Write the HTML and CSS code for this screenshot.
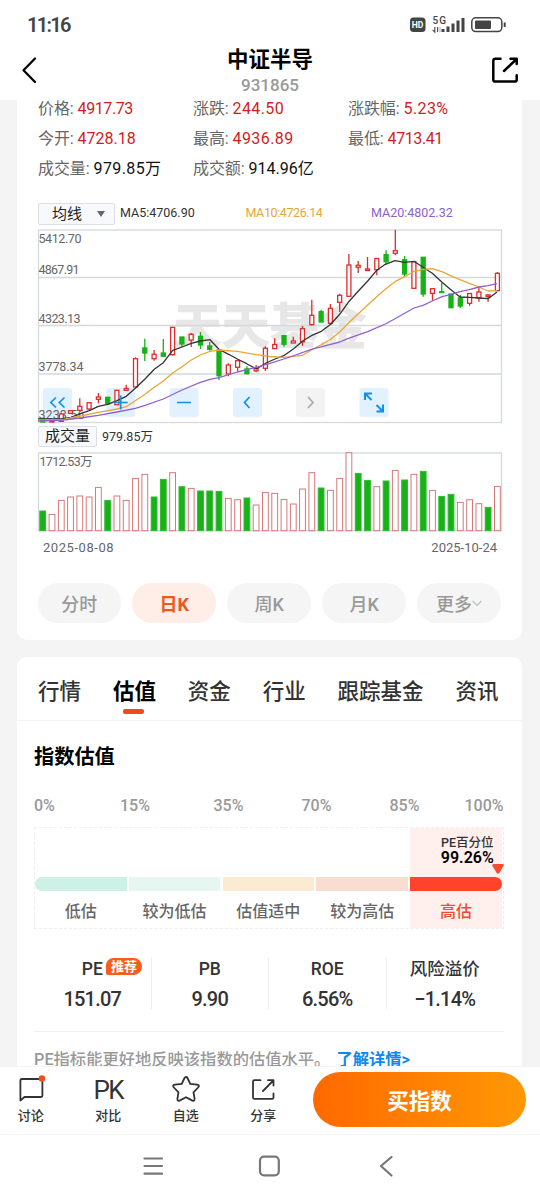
FILE: index.html
```html
<!DOCTYPE html>
<html lang="zh-CN">
<head>
<meta charset="utf-8">
<meta name="viewport" content="width=device-width">
<title>中证半导</title>
<link rel="stylesheet" href="styles.css">
</head>
<body>
<div class="phone">
  <header class="top">
    <div class="status">
      <span class="clock">11:16</span>
      <svg class="status-icons" width="98" height="20" viewBox="409 15 98 20">
        <rect x="410" y="17.5" width="15.5" height="14.5" rx="3.5" fill="#444"/>
        <text x="411.8" y="28.2" font-size="8.5" font-weight="700" fill="#fff" textLength="11.6" lengthAdjust="spacingAndGlyphs">HD</text>
        <text x="432.5" y="24" font-size="10" font-weight="500" fill="#444" textLength="13.5">5G</text>
        <path d="M434.8 27v5l-2.2-2.2M437.6 32v-5" stroke="#555" fill="none" stroke-width="1.2"/><path d="M440 27v5" stroke="#aaa"/>
        <path d="M443 29v3M448 26.5V32M453 23.500V32M458 20.500V32M463 18V32" stroke="#444" stroke-width="3"/>
        <rect x="471.800" y="17.800" width="30" height="13.800" rx="4" fill="none" stroke="#444" stroke-width="1.500"/>
        <rect x="475" y="20.500" width="16" height="8.500" rx="1" fill="#444"/>
        <path d="M504.700 22.500v4.500" stroke="#444" stroke-width="2"/>
      </svg>
    </div>
    <div class="titlebar">
      <svg width="28" height="28" viewBox="15 56 28 28"><path d="M35 58.500 23.500 70.200 35 82" fill="none" stroke="#000" stroke-width="2.300" stroke-linecap="round" stroke-linejoin="round"/></svg>
      <div class="heading"><h1>中证半导</h1><p>931865</p></div>
      <svg width="28" height="28" viewBox="491 56 28 28" fill="none" stroke="#000" stroke-width="2.500" stroke-linecap="round" stroke-linejoin="round"><path d="M500.500 58.700h-5q-2.200 0-2.200 2.200v18.500q0 2.200 2.200 2.200h19q2.200 0 2.200-2.200v-4.200M510.500 58.700h6.200v5.300M516 59.500 504 71"/></svg>
    </div>
  </header>

  <main class="content">
    <section class="card quote">
      <dl class="facts">
        <div><dt>价格:</dt><dd class="up tight">4917.73</dd></div>
        <div><dt>涨跌:</dt><dd class="up wide">244.50</dd></div>
        <div><dt>涨跌幅:</dt><dd class="up wide">5.23%</dd></div>
        <div><dt>今开:</dt><dd class="up">4728.18</dd></div>
        <div><dt>最高:</dt><dd class="up wide">4936.89</dd></div>
        <div><dt>最低:</dt><dd class="up tight">4713.41</dd></div>
        <div><dt>成交量:</dt><dd class="wide">979.85万</dd></div>
        <div><dt>成交额:</dt><dd>914.96亿</dd></div>
      </dl>
      <div class="ma-row">
        <div class="select">均线<i class="caret"></i></div>
        <span class="ma ma5">MA5:4706.90</span>
        <span class="ma ma10">MA10:4726.14</span>
        <span class="ma ma20">MA20:4802.32</span>
      </div>
      <svg class="chart" id="price" width="466" height="196" viewBox="37 228 466 196">
        <text class="watermark" x="173" y="344" textLength="194">天天基金</text>
        <path class="grid" d="M38.300 277.500H502M38.300 325.500H502M38.300 374H502"/>
        <rect class="grid" x="38.500" y="230" width="463" height="192.500"/>
        <g fill="#d9eeff" fill-opacity=".8">
          <rect x="43" y="388" width="29" height="29" rx="3"/><rect x="106.300" y="388" width="29" height="29" rx="3"/><rect x="169.500" y="388" width="29" height="29" rx="3"/><rect x="233" y="388" width="29" height="29" rx="3"/><rect x="359.500" y="388" width="29" height="29" rx="3"/>
        </g>
        <rect x="296" y="388" width="29" height="29" rx="3" fill="#f3f3f3"/>
        <g class="axis">
          <text x="38.500" y="243" textLength="43">5412.70</text>
          <text x="38.500" y="274" textLength="41">4867.91</text>
          <text x="38.500" y="322.500" textLength="42">4323.13</text>
          <text x="38.500" y="370.500" textLength="45">3778.34</text>
          <text x="38.500" y="418.500" textLength="46">3233.56</text>
        </g>
        <g id="candles"></g>
        <g fill="none" stroke="#1290e8" stroke-width="1.700">
          <path d="M56 397.500 50.800 402.500 56 407.500M64.500 397.500 59.300 402.500 64.500 407.500M120.700 395.500v14M113.700 402.500h14M177 402.500h14M249.500 397 244.500 402.500 249.500 408"/>
          <path stroke-width="2" d="M365 400v-6.500h7M365 393.500l6.500 6.500M376.500 411.500h6.500v-7M383 411.500l-6.500-6.500"/>
          <path d="M308 397 313 402.500 308 408" stroke="#aaa"/>
        </g>
      </svg>
      <div class="vol-row"><div class="select small">成交量</div><span>979.85万</span></div>
      <svg class="chart volume" width="466" height="80" viewBox="37 452 466 80">
        <rect class="grid" x="38.500" y="453" width="463" height="77.700"/>
        <text class="axis" x="39.500" y="466" textLength="53">1712.53万</text>
        <g id="bars"></g>
      </svg>
      <div class="dates"><span class="from">2025-08-08</span><span>2025-10-24</span></div>
      <div class="periods">
        <button>分时</button><button class="on">日K</button><button>周K</button><button>月K</button>
        <button>更多<svg width="10" height="7" viewBox="0 0 10 7"><path d="m.7 1 4.300 4.500L9.300 1" fill="none" stroke="#bbb" stroke-width="1.100"/></svg></button>
      </div>
    </section>

    <section class="card valuation">
      <nav class="tabs"><a>行情</a><a class="on">估值</a><a>资金</a><a>行业</a><a>跟踪基金</a><a>资讯</a></nav>
      <div class="panel">
        <h2>指数估值</h2>
        <div class="scale"><span>0%</span><span>15%</span><span>35%</span><span>70%</span><span>85%</span><span>100%</span></div>
        <div class="bands">
          <div class="band b1"><i></i><span>低估</span></div>
          <div class="band b2"><i></i><span>较为低估</span></div>
          <div class="band b3"><i></i><span>估值适中</span></div>
          <div class="band b4"><i></i><span>较为高估</span></div>
          <div class="band b5"><div class="mark"><small>PE百分位</small><b>99.26%</b></div><svg class="pin" width="12" height="10" viewBox="0 0 12 10"><path d="M1.500 0h9q2 .3 1 2L7.300 9Q6 10.500 4.700 9L.5 2Q-.2.300 1.500 0" fill="#fb4a32"/></svg><i></i><span>高估</span></div>
        </div>
        <div class="metrics">
          <div><span>PE<em>推荐</em></span><b>151.07</b></div>
          <div><span>PB</span><b>9.90</b></div>
          <div><span>ROE</span><b>6.56%</b></div>
          <div><span>风险溢价</span><b>−1.14%</b></div>
        </div>
        <p class="note">PE指标能更好地反映该指数的估值水平。<a>了解详情&gt;</a></p>
      </div>
    </section>
  </main>

  <footer class="actions">
    <div class="action"><svg width="28" height="28" viewBox="17 1075 28 28"><path d="M20.400 1100.500v-20q0-1.500 1.500-1.500h19q1.500 0 1.500 1.500v15q0 1.500-1.500 1.500H24.500z" fill="none" stroke="#333" stroke-width="1.800" stroke-linejoin="round"/><circle cx="42" cy="1078.500" r="3.300" fill="#ee4e1c"/></svg><span>讨论</span></div>
    <div class="action"><strong>PK</strong><span>对比</span></div>
    <div class="action"><svg width="28" height="28" viewBox="171.500 1075 28 28"><path d="M185.500 1077Q186.500 1077 187 1078L189.800 1083.800 196.600 1084.700Q199.600 1085.300 197.600 1087.500L193 1092.300 194.100 1098.800Q194.200 1101.400 191.900 1100.600L185.500 1097.300 179.100 1100.600Q176.800 1101.400 176.900 1098.800L178 1092.300 173.400 1087.500Q171.400 1085.300 174.400 1084.700L181.200 1083.800 184 1078Q184.500 1077 185.500 1077Z" fill="none" stroke="#333" stroke-width="1.800"/></svg><span>自选</span></div>
    <div class="action"><svg width="28" height="28" viewBox="249.500 1075 28 28"><path d="M261 1080.200h-6q-1.500 0-1.500 1.500v15.700q0 1.500 1.500 1.500h17.500q1.500 0 1.500-1.500v-4M268.500 1080.200h5.500v5.300M273.800 1080.500l-10.300 10.500" fill="none" stroke="#333" stroke-width="1.800" stroke-linecap="round" stroke-linejoin="round"/></svg><span>分享</span></div>
    <button class="buy">买指数</button>
  </footer>
  <div class="sysnav">
    <svg width="540" height="65" viewBox="0 1135 540 65" fill="none" stroke="#777" stroke-width="2.200" stroke-linecap="round" stroke-linejoin="round"><path d="M144.500 1158.500h17.500M144.500 1166h17.500M144.500 1173.700h17.500M391.500 1157l-10.500 9 10.500 9.500"/><rect x="260" y="1156.700" width="18.800" height="18.600" rx="4"/></svg>
  </div>
</div>
<script src="chart.js"></script>
</body>
</html>
```

FILE: styles.css
```css
* { box-sizing: border-box; margin: 0; padding: 0; }
body { font-family: Roboto, "Noto Sans CJK SC", sans-serif; color: #333; background: #f4f4f4; }
button { border: 0; font: inherit; }
.phone { width: 540px; height: 1200px; display: flex; flex-direction: column; overflow: hidden; }
.top { height: 100px; flex: none; background: #fff; }
.status { height: 49px; padding: 15px 33px 0 27px; display: flex; justify-content: space-between; }
.status-icons { overflow: visible; }
.clock { font-size: 20px; line-height: 20px; font-weight: 600; color: #444; letter-spacing: -1.700px; }
.titlebar { display: flex; justify-content: space-between; padding: 0 21px 0 15px; }
.titlebar svg { margin-top: 7px; }
.heading { text-align: center; padding-left: 6px; }
h1 { font-size: 21.500px; line-height: 22px; font-weight: 700; color: #000; }
.heading p { font-size: 17px; line-height: 18px; margin-top: 5px; font-weight: 500; color: #999; }
.content { height: 966px; flex: none; overflow: hidden; padding: 0 18px 0 17px; }
.card { background: #fff; border-radius: 10px; }
.quote { height: 540px; padding: 0 20px; border-radius: 0 0 10px 10px; display: flow-root; }
.facts { display: grid; grid-template-columns: repeat(3, 155px); grid-auto-rows: 30px; height: 94px; margin-top: -6.500px; padding-left: 1px; }
.facts div { display: flex; align-items: center; gap: 4px; font-size: 16px; line-height: 14px; white-space: nowrap; }
dt { color: #666; letter-spacing: -.1px; }
dd { color: #111; }
.up { color: #cf1d1d; }
.tight { letter-spacing: -.4px; }
.wide { letter-spacing: .4px; }
.ma-row { height: 40.500px; padding: 15.500px 0 0 1px; display: flex; align-items: flex-start; font-size: 12.500px; line-height: 19px; white-space: nowrap; }
.select { width: 77px; height: 22px; border: 1px solid #dcdfe3; border-radius: 2px; background: #f7f9fc; padding-left: 13px; display: flex; align-items: center; font-size: 15px; color: #222; }
.caret { margin-left: 15px; border: 4.500px solid transparent; border-top: 6px solid #666; border-bottom: 0; }
.ma5 { margin-left: 5px; width: 125.500px; }
.ma10 { width: 125.500px; color: #e5a735; letter-spacing: -.4px; }
.ma20 { color: #8c5fce; }
.chart { display: block; overflow: visible; }
.grid { fill: none; stroke: #d4d9dc; stroke-width: 1.300; }
.axis { font-size: 12.500px; fill: #666; }
.watermark { font-size: 49px; font-weight: 900; fill: #e7e7e7; }
.vol-row { height: 28px; padding: 2px 0 0 1px; display: flex; gap: 5px; font-size: 12.500px; line-height: 21px; }
.select.small { width: 59px; height: 21px; padding-left: 6px; }
.dates { display: flex; justify-content: space-between; padding: 8px 5px 0 6px; height: 51px; font-size: 13px; line-height: 16px; color: #666; }
.dates .from { letter-spacing: .55px; }
.periods { display: grid; grid-template-columns: repeat(5, 83.300px); gap: 11.700px; padding-left: .5px; }
.periods button { height: 40px; border-radius: 20px; background: #f5f5f5; color: #999; font-size: 18px; font-weight: 500; display: flex; align-items: center; justify-content: center; padding: 0; }
.periods .on { background: #ffede7; color: #ea5920; font-weight: 700; }
.valuation { margin-top: 17px; height: 430px; }
.tabs { height: 64px; padding: 20px 23.500px 0 21px; display: flex; justify-content: space-between; border-bottom: 1px solid #f4f4f4; font-size: 21.500px; line-height: 29px; font-weight: 500; color: #333; }
.tabs .on { position: relative; color: #000; font-weight: 700; }
.tabs .on::after { content: ""; position: absolute; left: 10px; top: 32px; width: 21px; height: 4.500px; border-radius: 2px; background: #eb4d16; }
.panel { padding: 22px 18px 0 17px; }
h2 { font-size: 20.200px; line-height: 28px; font-weight: 700; color: #000; }
.scale { display: grid; grid-template-columns: 86px 93.500px 88px 88px 75px auto; margin-top: 25px; height: 31px; line-height: 20px; font-size: 16px; font-weight: 500; color: #999; }
.bands { height: 102px; border: 1px dashed #eee; display: grid; grid-template-columns: repeat(5, 91.600px); gap: 2.200px; }
.band { position: relative; padding-top: 49px; text-align: center; font-size: 16px; line-height: 20px; font-weight: 500; color: #666; white-space: nowrap; }
.band i { display: block; height: 14px; margin-bottom: 10.600px; }
.b1 i { background: #cdf1e6; border-radius: 7px 0 0 7px; }
.b2 i { background: #e6f7f1; }
.b3 i { background: #fbebd2; }
.b4 i { background: #f9ddd1; }
.b5 { background: #ffefed; color: #ef4a35; }
.b5 i { background: #ff442b; border-radius: 0 7px 7px 0; }
.mark { position: absolute; top: 7px; right: 8px; text-align: center; color: #333; }
.mark small { display: block; font-size: 12.500px; line-height: 15px; }
.mark b { display: block; font-size: 16px; line-height: 16px; font-weight: 600; color: #000; }
.pin { position: absolute; left: 82px; top: 36px; }
.metrics { display: grid; grid-template-columns: repeat(4, 1fr); margin-top: 28px; height: 75px; border-bottom: 1px solid #eee; }
.metrics div { position: relative; height: 52px; display: flex; flex-direction: column; align-items: center; border-right: 1px solid #eee; }
.metrics div:last-child { border-right-color: transparent; }
.metrics span { font-size: 17.500px; line-height: 24px; font-weight: 500; white-space: nowrap; }
.metrics b { font-size: 20px; line-height: 24px; font-weight: 500; margin-top: 6px; letter-spacing: -.8px; }
.metrics em { position: absolute; left: 72px; top: 1px; width: 36px; height: 17px; border-radius: 8px 9px 9px 2px; background: #f45d1b; color: #fff; font-size: 13px; line-height: 17px; font-weight: 700; font-style: normal; text-align: center; }
.note { margin-top: 16px; line-height: 24px; font-size: 16.300px; font-weight: 500; color: #999; white-space: nowrap; }
.note a { color: #0c88f5; font-weight: 700; margin-left: 6px; }
.actions { height: 69px; flex: none; background: #fff; border-bottom: 1px solid #f4f4f4; border-top: 1px solid #f4f4f4; display: flex; }
.action { width: 77.500px; height: 60px; margin-left: -8px; margin-right: 8px; padding-top: 8px; display: flex; flex-direction: column; align-items: center; }
.action span { font-size: 13px; line-height: 16px; font-weight: 500; margin-top: 5px; }
.action strong { height: 28px; line-height: 30px; font-size: 26px; font-weight: 400; letter-spacing: -1.500px; }
.buy { width: 213px; height: 55px; margin: 5px 0 0 3px; border-radius: 28px; color: #fff; font-size: 21.500px; font-weight: 700; background: linear-gradient(90deg, #ff6900, #ff9805); }
.sysnav { flex: 1; background: #fff; }
.sysnav svg { display: block; }
```

FILE: chart.js
```javascript
const FIRST_X = 42.7, STEP = 9.28;
const x = i => +(FIRST_X + i * STEP).toFixed(1);
const RED = '#e02b2b', GREEN = '#16b316';

// Candles: direction, high, body top, body bottom, low.
const candles = [
  ['g',418.300,418.300,422,422],['r',421,421,422,422],['r',412.700,414,421.300,422],['r',410,410.700,413.300,414],
  ['r',398.300,406.300,410.300,411.300],['r',402,402.700,409,409.700],['r',393,397,399.300,403.300],['g',397.300,397.300,403.700,403.700],
  ['r',390.300,390.300,404.700,405],['r',384.700,388.500,390.300,390.300],['r',357.300,358.700,387,387],['g',338.700,348,353,361],
  ['r',350,354.300,358.700,360.700],['g',339,353,356.300,356.300],['r',327.300,327.300,354.700,355.700],['g',337,337,344,347],
  ['r',333,334.300,340,347],['g',332,336.300,345,349],['g',342,346,349.300,350.700],['g',350,350,375.700,380],
  ['r',363.300,365,374,376.300],['r',359.700,360.700,367.300,371.300],['g',366.300,369,373.700,374.300],['r',365,368.500,370.800,372.300],
  ['r',346.300,348.300,368.300,371],['r',338.300,344.500,348.600,348.600],['g',335.700,335.700,344.300,346.700],['r',336.700,341,343,343],
  ['r',326,328.700,341.700,345.700],['r',299.700,315.300,324.700,325.500],['g',309.700,311.700,322,322],['r',304,308.300,323.300,324.500],
  ['r',293.700,295.300,302.300,312],['r',254,265,296.300,296.300],['r',261,265.300,267.300,273],['r',257,269,270.500,270.500],
  ['r',258,258.500,269.700,275.300],['g',250.300,254.700,261.700,264],['r',229.700,250.700,253.300,255],['g',256,259.700,274,276.700],
  ['r',261.700,261.700,288.300,288.300],['g',257.300,257.300,294,296.700],['r',288.700,288.700,293.300,300.700],['g',283,291.700,292.600,292.600],
  ['g',294,294,307.700,307.700],['g',295,298,306,308],['r',293.300,293.500,303.300,305.700],['r',286.700,292,298,301.700],
  ['r',294,295,296.500,301.700],['r',272,273.300,290.700,290.700]
];
const bodies = candles.map(([d, hi, t, b, lo], i) => {
  const c = d === 'g' ? GREEN : RED, cx = x(i);
  const fill = d === 'g' ? GREEN : '#fff';
  return `<path d="M${cx} ${hi}V${t}M${cx} ${b}V${lo}" stroke="${c}" stroke-width="1.3"/>` +
    `<rect x="${cx - 2}" y="${t}" width="4" height="${b - t}" fill="${fill}" stroke="${c}" stroke-width="1.3"/>`;
}).join('');

// Moving average polylines.
const averages = {
  '#333': '38,419 61,419 71,417.300 80.300,413.700 89.300,410.700 98.300,406.300 107.700,404.300 117,400.700 126.300,396.300 135.300,388.300 145,379 154.300,369.300 163.300,362.700 172.700,350.300 182,347 191.300,343.300 200.300,341 210,339.700 219,349.300 228.700,354.300 237.300,359 246.700,363.700 256.300,369 266,363 275,359 283.700,355.700 293.700,348.700 302.700,341 311.300,335.700 320.700,331.700 330.700,324.300 339.700,314.300 348.300,302.300 357.700,291.700 367.700,281 376.700,270.300 385.300,264.300 395,260.700 404.700,262.300 414,261.300 423,267.300 432.300,273.300 442,282.300 450.300,289.300 460,297 469.300,297.300 479,298 488,298.700 497,292',
  '#e8a735': '38,420 61,420 80.300,416 98.300,412.300 117,409 126.300,406.700 135.300,400.700 145,394.300 154.300,387.300 163.300,381 172.700,373 182,366.700 191.300,360 200.300,355 210,351.300 219,350 237.300,351.300 256.300,354.700 270,356.500 283.700,357.300 302.700,355.300 311.300,350 320.700,345 330.700,339.300 339.700,332 348.300,323.300 357.700,314.300 367.700,305 376.700,296.700 385.300,289.300 395,281.700 404.700,276.700 414,271.300 423,269.300 432.300,268.700 442,271.700 450.300,275.700 460,279.700 469.300,283.300 479,287 488,291 497,290.700',
  '#9160d3': '38,421 61,420.300 80.300,418 98.300,415.300 117,412 135.300,408.300 145,405.300 163.300,399 182,390 200.300,382.300 210,379.300 219,377.700 237.300,372 256.300,367.300 270,363.300 290,357 311.300,349.300 330.700,344.300 339.700,342 348.300,338.300 367.700,331.700 385.300,324 395,318.700 414,308 423,305.300 432.300,301 442,296.700 450.300,294.700 460,291.700 469.300,289.700 479,287 488,285.700 497,283.700'
};
const lines = Object.entries(averages).map(([c, p]) =>
  `<polyline points="${p}" fill="none" stroke="${c}" stroke-width="1.3" stroke-linejoin="round"/>`).join('');
document.getElementById('candles').innerHTML = bodies + lines;

// Volume: bar heights, with the falling days listed separately.
const volume = [19.700,16.300,30.300,33.700,34.700,33.700,43.300,30.300,34.700,30.300,52.300,56.300,33.700,51.300,58,44,42.300,39.700,39.700,39.300,32.300,31,32.700,25.700,38.300,37.300,31.300,26.700,41.700,58,42.700,40.300,52.300,78,57.300,50.300,44,49.700,60.300,50.700,56.300,59.300,40.300,34.300,36.300,28.300,31,27,23.300,44.300];
const falling = [0,7,12,13,15,17,18,19,22,30,34,35,37,39,41,43,44,48];
document.getElementById('bars').innerHTML = volume.map((h, i) => {
  const down = falling.includes(i);
  return `<rect x="${x(i) - 2.9}" y="${530.7 - h}" width="5.8" height="${h}" fill="${down ? GREEN : '#fff'}" stroke="${down ? '#35b835' : '#d87878'}" stroke-width="1"/>`;
}).join('');
```
